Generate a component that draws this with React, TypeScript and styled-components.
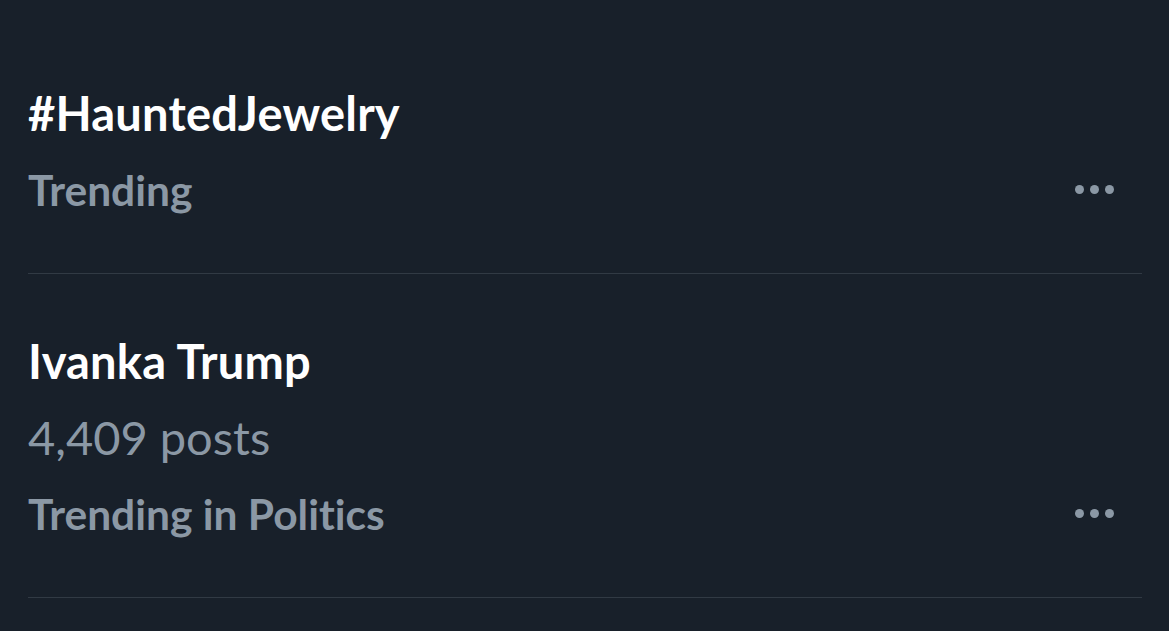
import React from 'react';
import styled, { createGlobalStyle } from 'styled-components';

type Trend = {
  title: string;
  posts?: string;
  context: string;
};

const trends: Trend[] = [
  { title: '#HauntedJewelry', context: 'Trending' },
  { title: 'Ivanka Trump', posts: '4,409 posts', context: 'Trending in Politics' },
];

const GlobalStyle = createGlobalStyle`
  html, body {
    margin: 0;
    padding: 0;
    background: #18202a;
  }
  body {
    font-family: Lato, "Noto Sans", sans-serif;
    font-variant-ligatures: none;
    -webkit-font-smoothing: antialiased;
  }
`;

const MoreDots = () => (
  <Dots aria-label='More'>
    <Dot />
    <Dot />
    <Dot />
  </Dots>
);

const TrendItem = ({ trend }: { trend: Trend }) => (
  <Row>
    <Info>
      <Title>{trend.title}</Title>
      {trend.posts && <Posts>{trend.posts}</Posts>}
      <ContextLine>
        <Context>{trend.context}</Context>
        <MoreDots />
      </ContextLine>
    </Info>
  </Row>
);

export default function App() {
  return (
    <>
      <GlobalStyle />
      <Page>
        {trends.map((trend) => (
          <TrendItem key={trend.title} trend={trend} />
        ))}
      </Page>
    </>
  );
}

const Page = styled.div`
  width: 1169px;
  height: 631px;
  padding: 0 27px 0 28px;
  box-sizing: border-box;
  overflow: hidden;
`;

const Row = styled.div`
  padding-top: 75px;
  padding-bottom: 46px;
  border-bottom: 1px solid #313a44;

  & + & {
    padding-top: 49px;
  }
`;

const Info = styled.div`
  display: flex;
  flex-direction: column;
`;

const Title = styled.div`
  color: #ffffff;
  font-size: 47px;
  font-weight: 700;
  line-height: 76px;
  letter-spacing: 0.2px;
`;

const Posts = styled.div`
  color: #8b98a5;
  font-size: 47px;
  font-weight: 400;
  line-height: 76px;
`;

const ContextLine = styled.div`
  display: flex;
  align-items: center;
  justify-content: space-between;
  padding-right: 28px;
  height: 76px;
`;

const Context = styled.span`
  color: #8b98a5;
  font-size: 42.5px;
  font-weight: 700;
`;

const Dots = styled.div`
  display: flex;
  gap: 6px;
`;

const Dot = styled.span`
  width: 9px;
  height: 9px;
  border-radius: 50%;
  background: #8b98a5;
`;
